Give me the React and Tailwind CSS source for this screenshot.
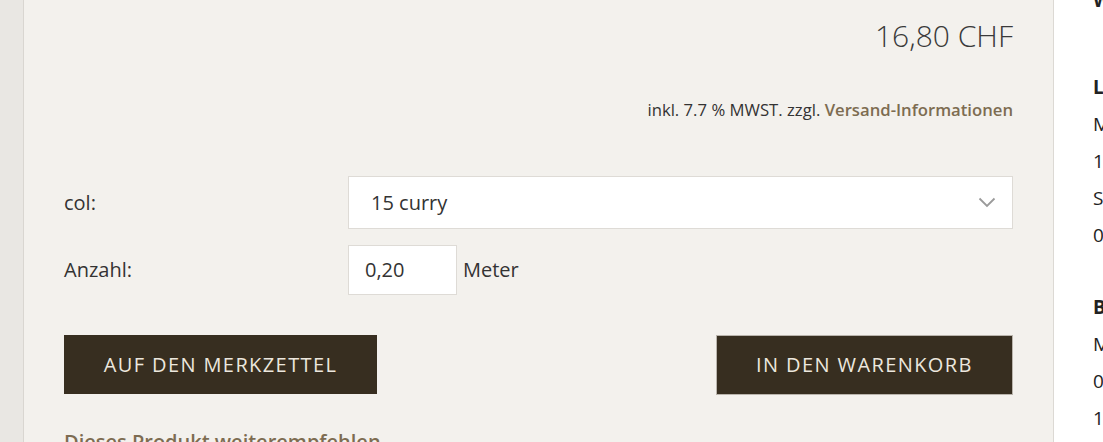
export default function App() {
  return (
    <div className="flex h-[442px] overflow-hidden bg-white font-['Open_Sans',sans-serif] text-[#333]">
      <div className="w-[24px] shrink-0 border-r border-[#d9d6d1] bg-[#e9e7e3]" />

      <div className="flex-1 border-r border-[#dcd9d4] bg-[#f3f1ed] px-[40px]">
        <div className="pt-[16px] text-right text-[30px] font-light leading-[40px] text-[#3a3a3a]">
          16,80 CHF
        </div>
        <div className="mt-[42px] text-right text-[16.7px] leading-[24px] text-[#333]">
          inkl. 7.7 % MWST. zzgl.{" "}
          <a className="font-semibold text-[#7d6c51]">Versand-Informationen</a>
        </div>

        <div className="mt-[54px] flex items-center">
          <label className="w-[284px] text-[20px]">col:</label>
          <div className="flex h-[53px] flex-1 items-center justify-between border border-[#dedbd6] bg-white pl-[22px] pr-[16px] text-[20px]">
            <span>15 curry</span>
            <svg width="18" height="11" viewBox="0 0 18 11" fill="none">
              <polyline points="1.5,1.5 9,9 16.5,1.5" stroke="#9a9a9a" strokeWidth="1.8" />
            </svg>
          </div>
        </div>

        <div className="mt-[16px] flex items-center">
          <label className="w-[284px] text-[20px]">Anzahl:</label>
          <div className="flex h-[50px] w-[109px] items-center border border-[#dedbd6] bg-white pl-[16px] text-[20px]">
            0,20
          </div>
          <span className="ml-[6px] text-[20px]">Meter</span>
        </div>

        <div className="mt-[40px] flex justify-between">
          <button className="h-[59px] w-[313px] bg-[#372e20] text-[20px] tracking-[1.4px] text-[#ece7de]">
            AUF DEN MERKZETTEL
          </button>
          <button className="h-[60px] w-[297px] border border-[#b9b4ac] bg-[#372e20] text-[20px] tracking-[1.4px] text-[#ece7de]">
            IN DEN WARENKORB
          </button>
        </div>

        <div className="mt-[32px] text-[20px] font-semibold text-[#7d6c51]">
          Dieses Produkt weiterempfehlen
        </div>
      </div>

      <div className="w-[49px] shrink-0 pl-[39px] text-[19px] leading-[37px] text-[#222]">
        <div className="-mt-[18px] font-bold">W</div>
        <div className="mt-[50px] font-bold">L</div>
        <div>M</div>
        <div>1</div>
        <div>S</div>
        <div>0</div>
        <div className="mt-[35px] font-bold">B</div>
        <div>M</div>
        <div>0</div>
        <div>1</div>
      </div>
    </div>
  );
}
